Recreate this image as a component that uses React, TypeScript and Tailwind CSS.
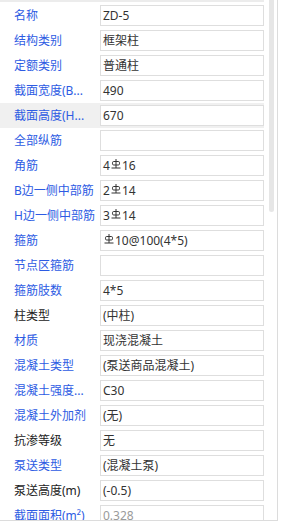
import React from "react";

type Row = {
    label: string;
    value?: string;
    plain?: boolean; // black label
    muted?: boolean; // gray value
    active?: boolean;
};

// "#" in a value marks the grade III rebar symbol
const rows: Row[] = [
    { label: "名称", value: "ZD-5" },
    { label: "结构类别", value: "框架柱" },
    { label: "定额类别", value: "普通柱" },
    { label: "截面宽度(B...", value: "490" },
    { label: "截面高度(H...", value: "670", active: true },
    { label: "全部纵筋", value: "" },
    { label: "角筋", value: "4#16" },
    { label: "B边一侧中部筋", value: "2#14" },
    { label: "H边一侧中部筋", value: "3#14" },
    { label: "箍筋", value: "#10@100(4*5)" },
    { label: "节点区箍筋", value: "" },
    { label: "箍筋肢数", value: "4*5" },
    { label: "柱类型", value: "(中柱)", plain: true },
    { label: "材质", value: "现浇混凝土" },
    { label: "混凝土类型", value: "(泵送商品混凝土)" },
    { label: "混凝土强度...", value: "C30" },
    { label: "混凝土外加剂", value: "(无)" },
    { label: "抗渗等级", value: "无", plain: true },
    { label: "泵送类型", value: "(混凝土泵)" },
    { label: "泵送高度(m)", value: "(-0.5)", plain: true },
    { label: "截面面积(m²)", value: "0.328", muted: true },
];

const RebarIII = () => (
    <svg width="10" height="10" viewBox="0 0 10 10" className="inline-block mx-[1px] -translate-y-[2px]" fill="none" stroke="currentColor" strokeWidth="1">
        <line x1="5" y1="0" x2="5" y2="9" />
        <rect x="1.5" y="2.5" width="7" height="3.5" rx="1.2" />
        <line x1="0.5" y1="9" x2="9.5" y2="9" />
    </svg>
);

const Value = ({ text }: { text: string }) => {
    const parts = text.split("#");
    return (
        <span className="flex items-center">
            {parts.map((p, i) => (
                <React.Fragment key={i}>
                    {i > 0 && <RebarIII />}
                    {p}
                </React.Fragment>
            ))}
        </span>
    );
};

export default function App() {
    return (
        <div className="w-[282px] h-[522px] bg-white overflow-hidden font-['Noto_Sans','Noto_Sans_CJK_SC',sans-serif] text-[12px]">
            <div className="w-[278px] h-[521px] flex border-r border-b border-[#dcdcdc] overflow-hidden">
                {/* property rows */}
                <div className="w-[264px] flex flex-col">
                    <div className="h-[2px] bg-[#ececec] mb-px shrink-0" />
                    {rows.map((r) => (
                        <div key={r.label} className={`h-[25px] shrink-0 flex items-center ${r.active ? "bg-[#f0f0f0]" : ""}`}>
                            <div className={`w-[100px] pl-[14px] whitespace-nowrap leading-[16px] ${r.plain ? "text-[#222]" : "text-[#2d5be3]"}`}>
                                {r.label}
                            </div>
                            <div className={`w-[164px] h-[21px] bg-white border border-[#dedede] flex items-center pl-[2px] whitespace-nowrap leading-[16px] ${r.muted ? "text-[#9a9a9a]" : "text-[#333]"}`}>
                                <Value text={r.value ?? ""} />
                            </div>
                        </div>
                    ))}
                </div>

                {/* scrollbar */}
                <div className="w-[13px] pl-[5px]">
                    <div className="w-[5px] h-[212px] bg-[#e6e6e6] rounded-b-[3px]" />
                </div>
            </div>
        </div>
    );
}
